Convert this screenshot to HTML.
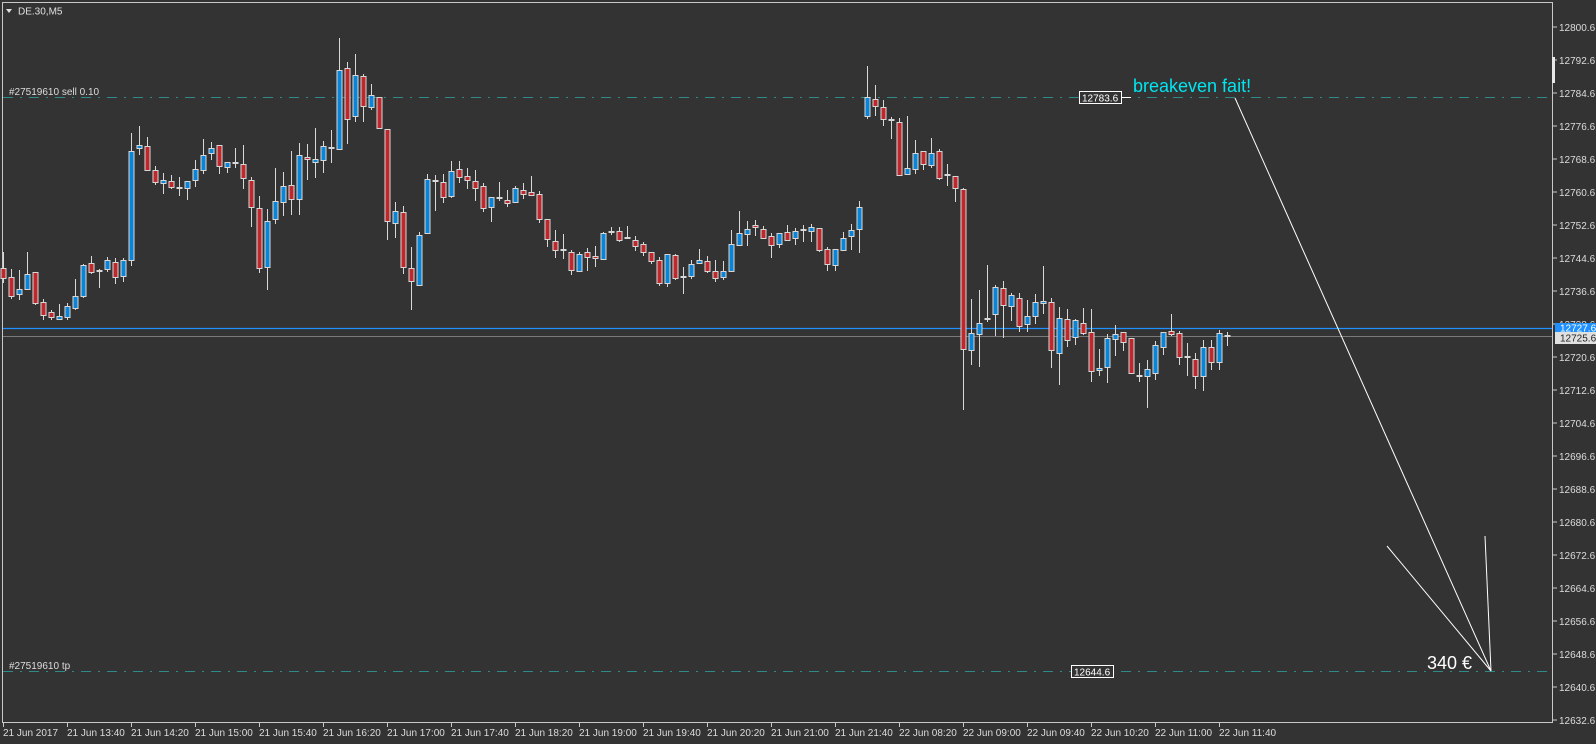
<!DOCTYPE html>
<html><head><meta charset="utf-8">
<style>
html,body{margin:0;padding:0;background:#333333;width:1596px;height:744px;overflow:hidden;font-family:"Liberation Sans",sans-serif;}
svg{display:block}
text{font-family:"Liberation Sans",sans-serif;}
</style></head><body>
<svg id="s" width="1596" height="744" xmlns="http://www.w3.org/2000/svg">
<rect x="0" y="0" width="1596" height="744" fill="#333333"/>
<rect x="2.5" y="2.5" width="1550" height="720" fill="none" stroke="#c8c8c8" stroke-width="1"/>
<path d="M6 9 L12 9 L9 13 Z" fill="#e0e0e0"/>
<text x="18" y="14.5" font-size="10" fill="#e0e0e0">DE.30,M5</text>
<line x1="3" y1="97.5" x2="1552" y2="97.5" stroke="#2f8a8a" stroke-width="1" stroke-dasharray="10,7,2,7"/>
<line x1="3" y1="671.5" x2="1552" y2="671.5" stroke="#2f8a8a" stroke-width="1" stroke-dasharray="10,7,2,7"/>
<text x="9" y="95" font-size="10" fill="#dcdcdc">#27519610 sell 0.10</text>
<text x="9" y="669" font-size="10" fill="#dcdcdc">#27519610 tp</text>
<line x1="3" y1="328.5" x2="1552" y2="328.5" stroke="#1e90ff" stroke-width="1.2"/>
<line x1="3" y1="336.5" x2="1552" y2="336.5" stroke="#7a7a7a" stroke-width="1"/>
<g id="c"></g>
<g id="ax"></g>
<rect x="1552" y="57" width="3" height="26" fill="#e8e8e8"/>
<rect x="1555" y="323" width="41" height="10" fill="#1e90ff"/>
<text x="1560" y="331.5" font-size="10" fill="#ffffff">12727.6</text>
<rect x="1555" y="332" width="41" height="12" fill="#e0e0e0"/>
<text x="1560" y="341.5" font-size="10" fill="#222">12725.6</text>
<rect x="1079.5" y="91.5" width="42" height="12" fill="#333" stroke="#fff"/>
<line x1="1122" y1="97.5" x2="1131" y2="97.5" stroke="#fff"/>
<text x="1082" y="101.5" font-size="10" fill="#fff">12783.6</text>
<rect x="1071.5" y="665.5" width="42" height="12" fill="#333" stroke="#fff"/>
<text x="1074" y="675.5" font-size="10" fill="#fff">12644.6</text>
<text x="1133" y="92" font-size="18" fill="#00e5f0">breakeven fait!</text>
<line x1="1235" y1="98" x2="1491" y2="671" stroke="#fff" stroke-width="1"/>
<line x1="1387" y1="546" x2="1491" y2="671" stroke="#fff" stroke-width="1"/>
<line x1="1485" y1="536" x2="1491" y2="671" stroke="#fff" stroke-width="1"/>
<text x="1427" y="669" font-size="18" fill="#fff">340 €</text>
</svg>
<script>
var D=[
[268,278,252,283,'r'],[277,296,269,299,'r'],[289,294,270,300,'b'],[274,289,252,289,'b'],[272,303,272,305,'r'],
[302,315,299,320,'r'],[312,317,310,320,'r'],[316,319,304,320,'b'],[306,317,303,320,'b'],[296,308,279,310,'b'],
[265,296,264,298,'b'],[263,272,256,274,'r'],[271,271,269,288,'d'],[260,269,257,272,'b'],[262,277,258,284,'r'],
[260,276,258,282,'b'],[151,260,133,266,'b'],[145,148,126,155,'b'],[146,170,137,171,'r'],[170,182,166,185,'r'],
[180,183,173,194,'b'],[181,187,175,189,'r'],[188,188,177,196,'d'],[181,188,181,200,'b'],[169,180,160,187,'b'],
[155,170,139,174,'b'],[148,153,142,160,'b'],[145,166,145,174,'r'],[162,167,162,173,'b'],[163,163,148,168,'d'],
[164,178,145,189,'r'],[180,207,177,227,'r'],[208,268,196,273,'r'],[221,267,209,290,'b'],[201,219,168,224,'b'],
[186,202,172,216,'b'],[185,199,151,215,'r'],[155,199,143,215,'b'],[157,159,144,180,'r'],[159,162,128,178,'b'],
[146,160,141,173,'b'],[148,148,130,163,'d'],[70,149,38,149,'b'],[68,119,62,144,'r'],[75,116,54,122,'b'],
[76,106,74,122,'r'],[95,107,84,110,'b'],[97,128,97,128,'r'],[129,221,129,240,'r'],[211,223,202,238,'b'],
[212,267,206,274,'r'],[268,281,247,310,'r'],[235,285,232,285,'b'],[179,233,174,233,'b'],[181,181,175,211,'d'],
[182,197,174,203,'r'],[171,196,161,198,'b'],[169,177,161,183,'r'],[176,180,168,189,'r'],[181,188,170,201,'r'],
[186,208,183,212,'r'],[197,207,197,222,'b'],[198,198,182,201,'d'],[200,203,190,207,'r'],[188,202,186,202,'b'],
[190,194,183,199,'r'],[192,195,176,196,'r'],[194,219,191,223,'r'],[219,239,219,247,'r'],[241,250,230,258,'r'],
[250,250,234,259,'d'],[252,270,250,275,'r'],[254,271,252,272,'b'],[252,257,248,271,'r'],[256,258,246,267,'r'],
[233,259,232,259,'b'],[232,232,227,235,'d'],[231,240,227,242,'r'],[238,238,226,239,'d'],[240,246,236,251,'r'],
[244,252,242,256,'r'],[252,261,252,264,'r'],[260,283,257,286,'r'],[254,283,254,287,'b'],[255,278,254,280,'r'],
[277,277,267,294,'d'],[264,276,260,279,'b'],[260,263,249,264,'b'],[261,271,256,273,'r'],[271,278,260,282,'r'],
[271,277,261,280,'b'],[244,271,230,271,'b'],[233,245,211,245,'b'],[229,234,221,246,'b'],[225,227,220,236,'r'],
[229,238,226,238,'r'],[236,245,233,258,'r'],[233,244,233,248,'b'],[232,240,225,240,'r'],[231,238,228,245,'b'],
[230,230,225,242,'d'],[227,231,224,242,'b'],[228,250,228,252,'r'],[249,264,247,271,'r'],[249,265,249,271,'b'],
[238,250,232,251,'b'],[230,236,224,250,'b'],[207,229,201,253,'b'],
[97,116,66,119,'b'],[99,106,85,116,'r'],[107,119,100,126,'r'],[120,120,117,139,'d'],[122,175,118,175,'r'],
[168,174,116,174,'b'],[153,169,140,174,'b'],[151,164,151,170,'r'],[153,165,138,168,'b'],[151,178,149,180,'r'],
[175,175,164,186,'d'],[176,188,176,202,'r'],[189,349,188,410,'r'],[333,350,299,365,'b'],[323,334,290,367,'b'],
[319,319,265,322,'d'],[287,314,285,336,'b'],[288,305,281,338,'r'],[295,306,293,321,'b'],[298,326,293,332,'r'],
[316,324,300,332,'b'],[302,316,294,324,'b'],[301,303,266,314,'b'],[302,350,298,368,'r'],[318,353,307,385,'b'],
[319,340,309,347,'r'],[320,337,319,345,'b'],[323,333,308,335,'r'],[332,371,309,382,'r'],[368,370,349,376,'b'],
[338,367,334,383,'b'],[334,339,325,356,'b'],[332,342,332,351,'r'],[338,373,338,373,'r'],[376,376,363,382,'d'],
[369,376,360,408,'b'],[345,373,341,380,'b'],[332,347,332,355,'b'],[331,334,314,336,'r'],[333,357,331,365,'r'],
[357,357,343,376,'d'],[359,376,353,389,'r'],[347,376,340,391,'b'],[347,362,340,370,'r'],[333,362,330,370,'b'],[336,336,332,346,'d']
];
var N=D.length, sp=8, h='';
for(var i=0;i<N;i++){var d=D[i],x=3+i*sp+0.5;
h+='<line x1="'+x+'" y1="'+d[2]+'" x2="'+x+'" y2="'+d[3]+'" stroke="#d8d8d8" stroke-width="1"/>';
if(d[4]=='d'){h+='<rect x="'+(x-3)+'" y="'+(d[0]-1)+'" width="6" height="2" fill="#d8d8d8"/>';}
else{var bh=Math.max(d[1]-d[0],2);h+='<rect x="'+(x-2.5)+'" y="'+(d[0]+0.5)+'" width="5" height="'+bh+'" fill="'+(d[4]=='b'?'#0a84d8':'#c0272d')+'" stroke="#d8d8d8" stroke-width="1"/>';}
}
document.getElementById('c').innerHTML=h;
var a='';
for(var k=0;k<22;k++){var p=12800.6-8*k,y=27+k*33;
a+='<line x1="1553" y1="'+y+'" x2="1557" y2="'+y+'" stroke="#c8c8c8"/>';
a+='<text x="1559" y="'+(y+4)+'" font-size="10" fill="#dcdcdc">'+p.toFixed(1)+'</text>';}
var L=['21 Jun 2017','21 Jun 13:40','21 Jun 14:20','21 Jun 15:00','21 Jun 15:40','21 Jun 16:20','21 Jun 17:00','21 Jun 17:40','21 Jun 18:20','21 Jun 19:00','21 Jun 19:40','21 Jun 20:20','21 Jun 21:00','21 Jun 21:40','22 Jun 08:20','22 Jun 09:00','22 Jun 09:40','22 Jun 10:20','22 Jun 11:00','22 Jun 11:40'];
for(var j=0;j<L.length;j++){var x=3+j*64+0.5;
a+='<line x1="'+x+'" y1="723" x2="'+x+'" y2="727" stroke="#c8c8c8"/>';
a+='<text x="'+(x-0.5)+'" y="736" font-size="10" fill="#dcdcdc">'+L[j]+'</text>';}
document.getElementById('ax').innerHTML=a;
</script>
</body></html>
